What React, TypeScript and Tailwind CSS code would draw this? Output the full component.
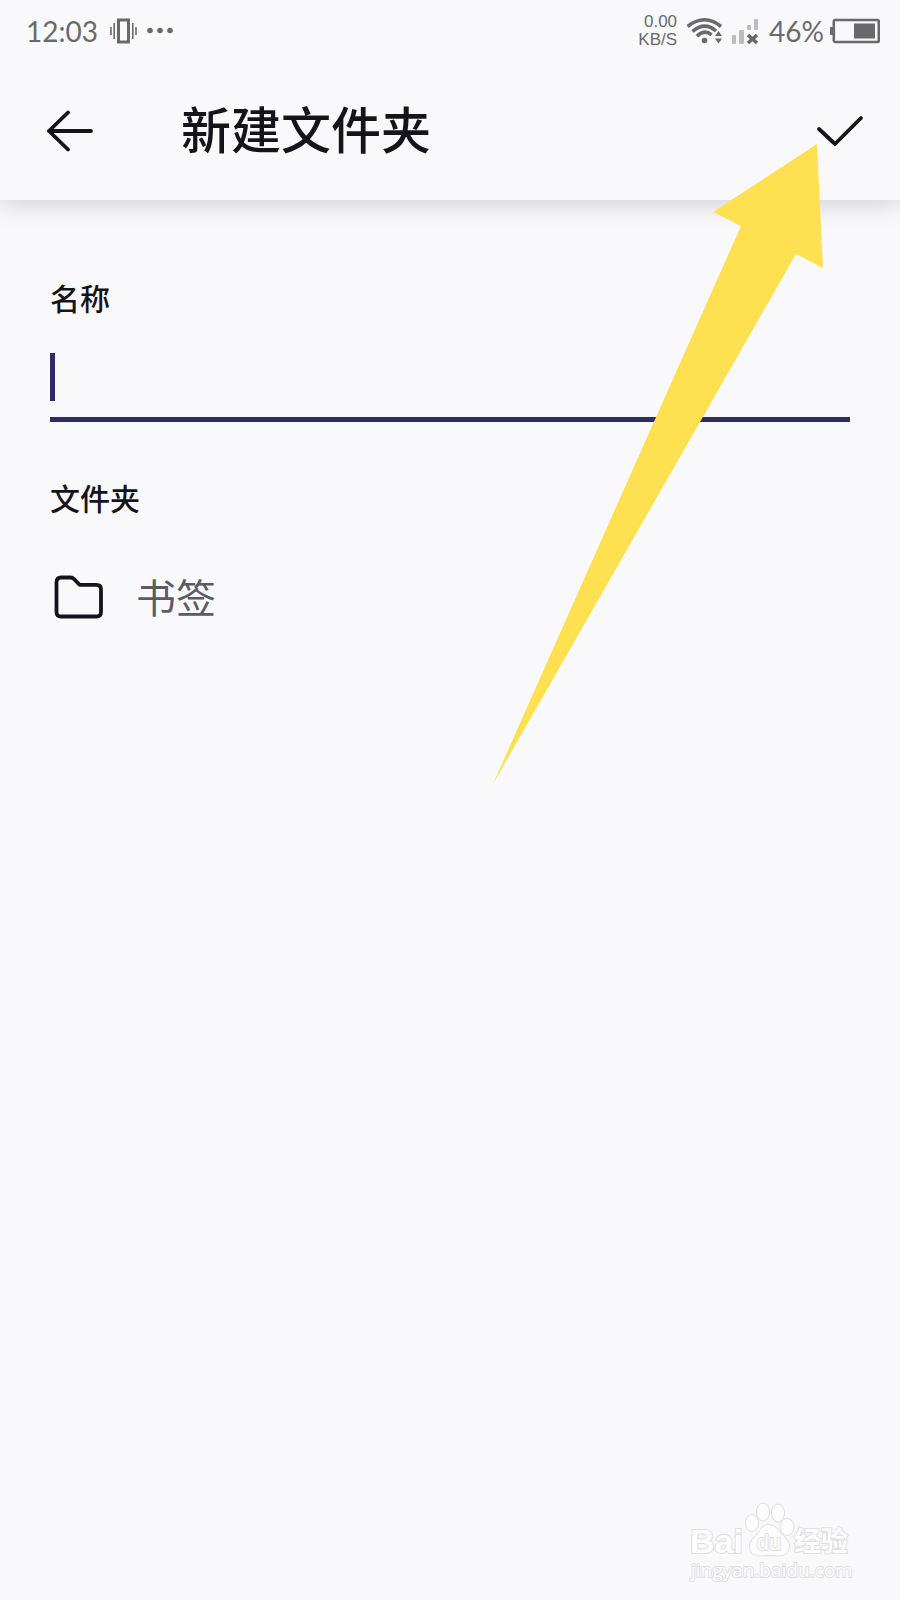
import { useState } from "react";

function StatusBar() {
  return (
    <div className="flex h-[62px] items-center justify-between pl-[26px] pr-5 font-['Lato',sans-serif] text-[28px] leading-8 text-[#6a6a6a]">
      <div className="flex items-center gap-3">
        <span>12:03</span>
        {/* vibrate */}
        <svg width="64" height="26" viewBox="0 0 64 26" fill="none" stroke="currentColor">
          <rect x="8.5" y="2" width="10" height="22" strokeWidth="3" />
          <path d="M1 9v8M4.2 5v16M22.8 5v16M26 9v8" strokeWidth="1.6" />
          <g fill="currentColor" stroke="none">
            <circle cx="40" cy="12.5" r="2.8" />
            <circle cx="50" cy="12.5" r="2.8" />
            <circle cx="60" cy="12.5" r="2.8" />
          </g>
        </svg>
      </div>
      <div className="flex items-center">
        <div className="mr-[10px] text-right font-['Liberation_Sans',sans-serif] text-[17px] leading-[18px]">
          <div>0.00</div>
          <div>KB/S</div>
        </div>
        {/* wifi */}
        <svg className="mr-2" width="36" height="28" viewBox="0 0 36 28" fill="none" stroke="currentColor" strokeWidth="3.6">
          <path d="M.5 9.5Q17.5 -4 34 9.500" />
          <path d="M5.5 14.500Q17.500 4.200 29 14" />
          <path d="M10 19.200Q17.500 12 24.500 17.800" />
          <g fill="currentColor" stroke="none">
            <circle cx="17.500" cy="23.500" r="2.8" />
            <path d="M31.500 14l3.600 5h-7.200zM31.500 26.500l-3.600-5h7.200z" />
          </g>
        </svg>
        {/* mobile signal */}
        <svg className="mr-[10px]" width="28" height="28" viewBox="0 0 28 28" fill="#bdbdbf">
          <rect x="1" y="18" width="4" height="9" rx="1" />
          <rect x="8" y="13" width="5" height="14" rx="1" />
          <rect x="16" y="8" width="4" height="5" rx="1" />
          <rect x="23" y="2" width="4" height="11" rx="1" />
          <path d="M17 18l9 8M26 18l-9 8" stroke="#666" strokeWidth="3.4" />
        </svg>
        <span className="mr-[6px]">46%</span>
        {/* battery */}
        <svg width="50" height="26" viewBox="0 0 50 26">
          <rect x="3.800" y="2" width="45" height="22" rx="1.500" fill="none" stroke="currentColor" strokeWidth="2.6" />
          <rect x="0" y="9" width="4" height="8" rx="1" fill="currentColor" />
          <rect x="24" y="5.500" width="21" height="15" fill="currentColor" />
        </svg>
      </div>
    </div>
  );
}

function Watermark() {
  return (
    <svg
      className="pointer-events-none absolute bottom-3 right-[46px]"
      width="166"
      height="88"
      viewBox="0 0 166 88"
      fill="#fdfdfe"
      stroke="#dfdfe2"
      strokeWidth="2"
      paintOrder="stroke"
    >
      <text x="2" y="53" fontSize="34" fontWeight="700" fontFamily="Liberation Sans, sans-serif">Bai</text>
      <ellipse cx="64" cy="23" rx="6" ry="8" />
      <ellipse cx="75" cy="12" rx="6" ry="8.500" />
      <ellipse cx="90" cy="13" rx="6" ry="8.500" />
      <ellipse cx="99" cy="27" rx="6.500" ry="8" />
      <path d="M80 25C87 25 89 29 93 34C98 39 102 42 101 48C100 56 92 56 81 55C70 56 63 56 62 48C61 41 67 38 71 32C74 28 76 25 80 25Z" />
      <text x="81" y="50" textAnchor="middle" fontSize="22" fontFamily="Liberation Sans, sans-serif">du</text>
      <text x="106" y="51" fontSize="27" fontWeight="700" fontFamily="Noto Sans CJK SC, sans-serif">经验</text>
      <text x="3" y="77" fontSize="19" fontFamily="Open Sans, sans-serif">jingyan.baidu.com</text>
    </svg>
  );
}

export default function App() {
  const [name, setName] = useState("");

  return (
    <div className="relative min-h-screen overflow-hidden bg-[#f9f9fb] font-['Noto_Sans_CJK_SC',sans-serif] text-[#15141a]">
      <header className="bg-[#f9f9fb] shadow-[0_4px_24px_rgba(0,0,0,0.17)]">
        <StatusBar />
        <div className="flex h-[138px] items-center px-9">
          <button type="button" aria-label="返回" className="flex size-[68px] items-center justify-center">
            <svg width="48" height="42" viewBox="0 0 48 42" fill="none" stroke="currentColor" strokeWidth="3.8" strokeLinecap="round" strokeLinejoin="round">
              <path d="M22 2.500L3 21L22 39.500M3 21H45" />
            </svg>
          </button>
          <h1 className="ml-[77px] flex-1 pb-2 text-[50px] font-medium leading-[68px]">新建文件夹</h1>
          <button type="button" aria-label="保存" className="flex w-12 items-center justify-center">
            <svg width="48" height="32" viewBox="0 0 48 32" fill="none" stroke="currentColor" strokeWidth="3.8" strokeLinecap="round" strokeLinejoin="round">
              <path d="M3 14L19 29L45 3" />
            </svg>
          </button>
        </div>
      </header>

      <main className="px-[50px] pt-[77px]">
        <label htmlFor="name" className="block text-[30px] font-medium leading-10">名称</label>
        <div className="relative mt-[27px]">
          <input
            id="name"
            type="text"
            value={name}
            onChange={(e) => setName(e.target.value)}
            className="block h-[78px] w-full border-b-[5px] border-[#312a65] bg-transparent text-[40px] caret-[#312a65] outline-none"
          />
          {name === "" && <span className="pointer-events-none absolute left-0 top-[9px] h-12 w-[5px] bg-[#312a65]" />}
        </div>

        <h2 className="mt-[55px] text-[30px] font-medium leading-10">文件夹</h2>
        <button type="button" className="mt-[49px] flex h-[62px] w-full items-center gap-8 pl-1 text-[40px] text-[#5b5b66]">
          <svg width="50" height="44" viewBox="0 0 50 44" fill="none" stroke="#15141a" strokeWidth="3.800" strokeLinejoin="round">
            <path d="M7 2.500H16.500Q18.500 2.500 20 4L25.500 9.800H42.500Q47 9.800 47 14.300V37Q47 41.500 42.500 41.500H7Q2.500 41.500 2.500 37V7Q2.500 2.500 7 2.500Z" />
          </svg>
          <span className="pb-[3px]">书签</span>
        </button>
      </main>

      {/* pointer towards the save button */}
      <svg className="pointer-events-none absolute right-[77px] top-36" width="330" height="640" viewBox="0 0 330 640" fill="#fee050">
        <path d="M324 0L330 124L303 110L0 640L248 82L220 68Z" />
      </svg>

      <Watermark />
    </div>
  );
}
